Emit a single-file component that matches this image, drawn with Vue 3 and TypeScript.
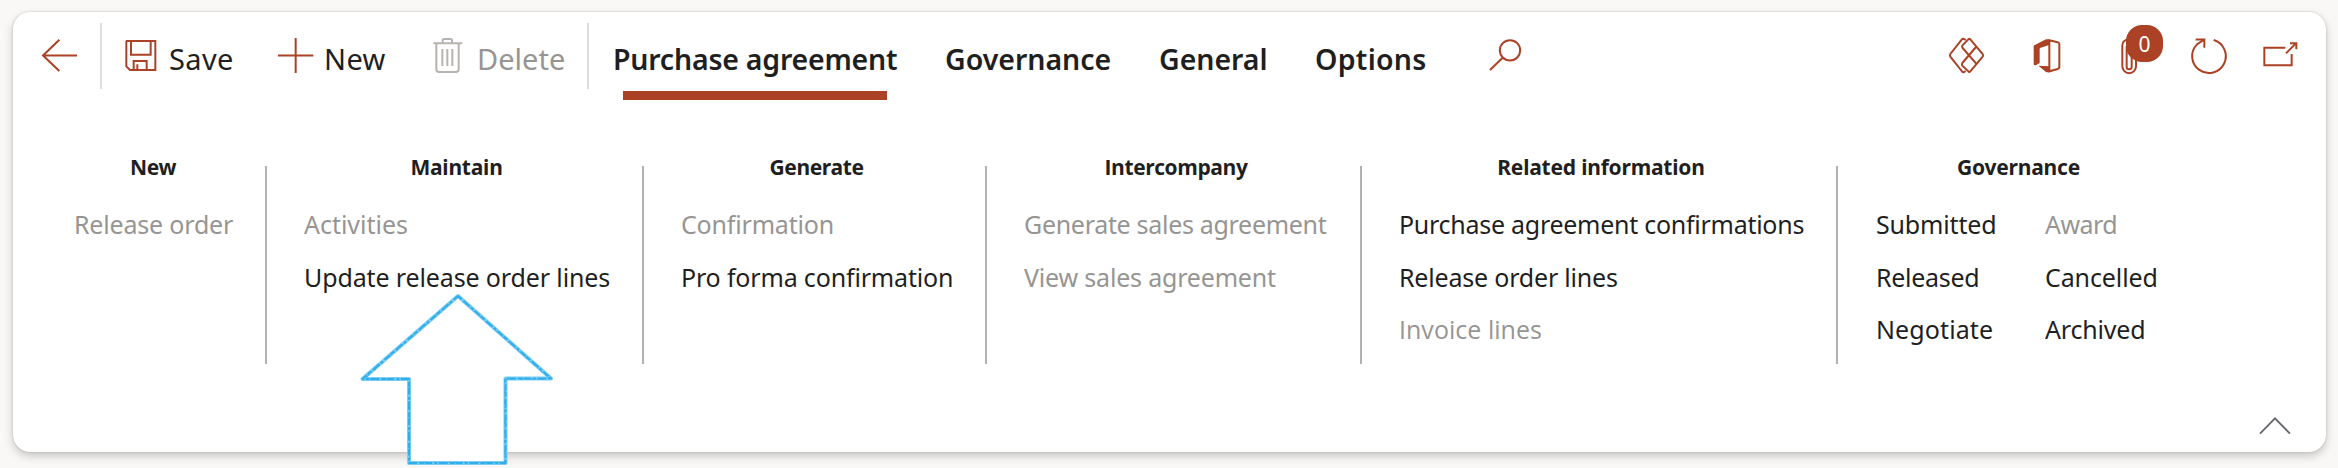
<script setup lang="ts">
interface Label {
  text: string
  width: number
  disabled?: boolean
}
interface Group {
  id: string
  title: Label
  columns: Label[][]
}

const tabs: Label[] = [
  { text: 'Purchase agreement', width: 282 },
  { text: 'Governance', width: 164.5 },
  { text: 'General', width: 105.4 },
  { text: 'Options', width: 109.3 },
]

const groups: Group[] = [
  {
    id: 'new',
    title: { text: 'New', width: 45.5 },
    columns: [[{ text: 'Release order', width: 157, disabled: true }]],
  },
  {
    id: 'maintain',
    title: { text: 'Maintain', width: 90.7 },
    columns: [[
      { text: 'Activities', width: 103, disabled: true },
      { text: 'Update release order lines', width: 303.3 },
    ]],
  },
  {
    id: 'generate',
    title: { text: 'Generate', width: 93 },
    columns: [[
      { text: 'Confirmation', width: 150.7, disabled: true },
      { text: 'Pro forma confirmation', width: 269 },
    ]],
  },
  {
    id: 'intercompany',
    title: { text: 'Intercompany', width: 142.3 },
    columns: [[
      { text: 'Generate sales agreement', width: 301.7, disabled: true },
      { text: 'View sales agreement', width: 252, disabled: true },
    ]],
  },
  {
    id: 'related',
    title: { text: 'Related information', width: 206 },
    columns: [[
      { text: 'Purchase agreement confirmations', width: 402.4 },
      { text: 'Release order lines', width: 216 },
      { text: 'Invoice lines', width: 140, disabled: true },
    ]],
  },
  {
    id: 'governance',
    title: { text: 'Governance', width: 121.6 },
    columns: [
      [
        { text: 'Submitted', width: 118.3 },
        { text: 'Released', width: 100.2 },
        { text: 'Negotiate', width: 114 },
      ],
      [
        { text: 'Award', width: 71.3, disabled: true },
        { text: 'Cancelled', width: 110.5 },
        { text: 'Archived', width: 99.3 },
      ],
    ],
  },
]

const ctx = document.createElement('canvas').getContext('2d')!

// Words with a capital I use the face whose I has no serifs.
function family(text: string): string {
  return text.startsWith('I') ? '"Open Sans"' : '"Noto Sans"'
}

// Tracks a label so that it spans its nominal width.
function fit(label: Label, size: number, weight: number) {
  ctx.font = `${weight} ${size}px ${family(label.text)}`
  const m = ctx.measureText(label.text)
  const ink = m.actualBoundingBoxLeft + m.actualBoundingBoxRight
  const spacing = (label.width - ink) / (label.text.length - 1)
  return {
    letterSpacing: `${spacing.toFixed(3)}px`,
    fontFamily: `${family(label.text)}, sans-serif`,
  }
}
</script>

<template>
  <div class="page">
    <section class="card">
      <header class="toolbar">
        <span></span>
        <button class="cmd" aria-label="Back">
          <svg class="icon" width="38" height="35" viewBox="34 69 114 105">
            <path d="M89 74L40 121.500L89 168M40 121.500H142" />
          </svg>
        </button>
        <i class="sep"></i>
        <button class="cmd">
          <svg class="icon" width="32" height="35" viewBox="285 69 96 105">
            <path d="M290 78H376V165H300L289 154V80ZM303 78V119H362V78M311 165V138H350V165M322 148V165" />
          </svg>
          <span class="cmd-text after-save" :style="fit({ text: 'Save', width: 62 }, 29, 400)">Save</span>
        </button>
        <button class="cmd">
          <svg class="icon" width="36" height="35" viewBox="0 0 108 105">
            <path d="M0 52.500H106M53 0V105" />
          </svg>
          <span class="cmd-text after-plus" :style="fit({ text: 'New', width: 59.5 }, 29, 400)">New</span>
        </button>
        <button class="cmd off">
          <svg class="icon" width="30" height="35" viewBox="0 0 90 105">
            <path d="M1 16H88M29 16V7Q29 3 33 3H53Q57 3 57 7V16M10 16V94Q10 102 18 102H69Q77 102 77 94V16M28 33V84M43 33V84M58 33V84" />
          </svg>
          <span class="cmd-text after-trash" :style="fit({ text: 'Delete', width: 85 }, 29, 400)">Delete</span>
        </button>
        <i class="sep"></i>
        <a
          v-for="(tab, i) in tabs"
          :key="tab.text"
          class="tab"
          :class="{ active: i === 0 }"
          :style="fit(tab, 28.5, 600)"
        >{{ tab.text }}</a>
        <svg class="icon" width="34" height="35" viewBox="1016 115 102 105">
          <circle cx="1079" cy="152" r="30.500" />
          <path d="M1057 174L1019 211" />
        </svg>
        <svg class="icon" width="35" height="35" viewBox="27 54 105 105">
          <path d="M77 60L72 57Q68 55 65 59L31 102Q28 106 31 110L65 153Q68 158 72 156L77 153M67 76L85 58Q88 55 91 58L128 102Q131 106 128 110L91 154Q88 158 85 154L67 137Q64 133 67 129L108 81M67 76Q65 80 68 84L108 130" />
        </svg>
        <svg class="icon" width="28" height="35" viewBox="281 54 84 105">
          <path class="solid" d="M283 79Q283 77 285 76L320 58Q322 57 325 58L332 60V74L304 83Q301 84 301 87V129L291 135Q283 138 283 131ZM297 137L331 139V156L324 157Q322 157 320 156Z" />
          <path d="M330 61L355 67Q360 68 360 73V141Q360 145 355 147L330 154Z" />
        </svg>
        <div class="attach">
          <svg class="icon" width="17" height="36" viewBox="34 66 51 108">
            <path d="M60 71Q38 70 38 88V151A20.500 20.500 0 0 0 79 151V90M51 90V152A7.500 7.500 0 0 0 66 152V90" />
          </svg>
          <span class="badge">0</span>
        </div>
        <svg class="icon" width="36" height="36" viewBox="244 67 108 108">
          <path d="M312 73A50.500 50.500 0 1 1 262 86L282 73M258 71.500H284V96" />
        </svg>
        <svg class="icon" width="36" height="35" viewBox="459 69 108 105">
          <path d="M526 98H463V151H545V117M528 115L557 86M540 84.500H559V103" />
        </svg>
      </header>

      <div class="panel">
        <div v-for="g in groups" :key="g.id" class="group" :class="g.id">
          <h2 class="title"><span :style="fit(g.title, 21, 700)">{{ g.title.text }}</span></h2>
          <div class="columns">
            <ul v-for="(col, c) in g.columns" :key="c" class="column">
              <li
                v-for="item in col"
                :key="item.text"
                :class="{ off: item.disabled }"
                :style="fit(item, 25, 400)"
              >{{ item.text }}</li>
            </ul>
          </div>
        </div>
      </div>

      <footer class="footer">
        <svg class="chevron" width="32" height="18" viewBox="1317 831 96 54">
          <path d="M1320 881L1365 835L1410 881" />
        </svg>
      </footer>
    </section>

    <svg class="pointer" width="200" height="180" viewBox="356 288 200 180">
      <path class="wash" d="M458 296L551 378.500H505.500V463H409V379H362.500Z" />
      <path class="grain" d="M458 296L551 378.500H505.500V463H409V379H362.500Z" />
      <path class="grain fine" d="M458 296.800L550 379.200H504.700V462.500H409.800V379.700H363.500Z" />
    </svg>
  </div>
</template>

<style>
body {
  margin: 0;
}
</style>

<style scoped>
.page {
  position: relative;
  box-sizing: border-box;
  width: 2338px;
  height: 468px;
  padding: 12px 12px 16px 13px;
  overflow: hidden;
  background: #f9f8f6;
  color: #1f1f1f;
  font-family: "Noto Sans", "Open Sans", sans-serif;
}
.card {
  display: flex;
  flex-direction: column;
  height: 440px;
  border-radius: 17px;
  background: #fff;
  box-shadow: 0 0 2px rgba(0, 0, 0, 0.22), 0 4px 10px rgba(0, 0, 0, 0.2);
}
.toolbar {
  display: grid;
  grid-template-columns: 28px 59px 25px 153px 155px 154px 26px 332px 214px 156px 174px 460px 84px 88px 70px 72px 1fr;
  height: 88px;
  padding-top: 11px;
  box-sizing: border-box;
}
.icon {
  display: block;
  flex: none;
  margin-top: 15px;
  fill: none;
  stroke: #ab4225;
  stroke-width: 6;
  overflow: visible;
}
.icon .solid {
  fill: #ab4225;
  stroke: none;
}
.cmd {
  display: flex;
  align-items: flex-start;
  padding: 0;
  border: 0;
  background: none;
  color: inherit;
}
.cmd-text {
  margin-top: 16px;
  font-size: 29px;
  line-height: 40px;
  white-space: nowrap;
}
.after-save {
  margin-left: 12px;
}
.after-plus {
  margin-left: 10px;
}
.after-trash {
  margin-left: 14px;
}
.off {
  color: #979593;
}
.off .icon {
  stroke: #b7b4ae;
}
.sep {
  width: 2px;
  height: 66px;
  background: #dedede;
}
.tab {
  justify-self: start;
  height: 61px;
  padding-top: 16px;
  font-size: 28.5px;
  font-weight: 600;
  line-height: 40px;
  white-space: nowrap;
}
.tab.active::after {
  content: "";
  display: block;
  width: 264px;
  height: 9px;
  margin: 12px 0 0 10px;
  background: #ab4225;
}
.attach {
  position: relative;
}
.badge {
  position: absolute;
  left: 5px;
  top: 2px;
  width: 37px;
  height: 37px;
  border-radius: 16px;
  background: #ab4225;
  color: #fff;
  font-size: 21px;
  line-height: 38px;
  text-align: center;
}
.panel {
  display: flex;
  height: 264px;
  padding-top: 52px;
  box-sizing: border-box;
}
.group {
  position: relative;
  box-sizing: border-box;
  height: 212px;
}
.group:not(:last-child)::after {
  content: "";
  position: absolute;
  right: 0;
  top: 14px;
  width: 2px;
  height: 198px;
  background: #b3b2ae;
}
.new {
  width: 254px;
  padding: 0 35px 0 61px;
}
.maintain {
  width: 377px;
  padding: 0 35px 0 37px;
}
.generate {
  width: 343px;
  padding: 0 35px 0 37px;
}
.intercompany {
  width: 375px;
  padding: 0 34px 0 37px;
}
.related {
  width: 476px;
  padding: 0 35px 0 37px;
}
.governance {
  width: 340px;
  padding: 0 17px 0 38px;
}
.title {
  display: flex;
  justify-content: center;
  height: 30px;
  margin: 0 0 16px;
  font-size: 21px;
  font-weight: 700;
  line-height: 30px;
  white-space: nowrap;
}
.columns {
  display: flex;
}
.column {
  margin: 0;
  padding: 0;
  list-style: none;
}
.governance .column:first-child {
  width: 169px;
}
.column li {
  height: 52.5px;
  font-size: 25px;
  line-height: 53px;
  white-space: nowrap;
}
.footer {
  display: flex;
  justify-content: flex-end;
  padding: 53px 35px 0 0;
}
.chevron {
  fill: none;
  stroke: #68666e;
  stroke-width: 5.5;
}
.pointer {
  position: absolute;
  left: 356px;
  top: 288px;
  stroke-linejoin: round;
}
.wash {
  fill: #fff;
  stroke: #7fcdf4;
  stroke-width: 4;
}
.grain {
  fill: none;
  stroke: #2eafec;
  stroke-width: 2;
  stroke-dasharray: 5 2 9 1.5 3 2 7 1;
}
.fine {
  stroke-width: 1;
  stroke-dasharray: 3 4 1 2;
}
</style>
